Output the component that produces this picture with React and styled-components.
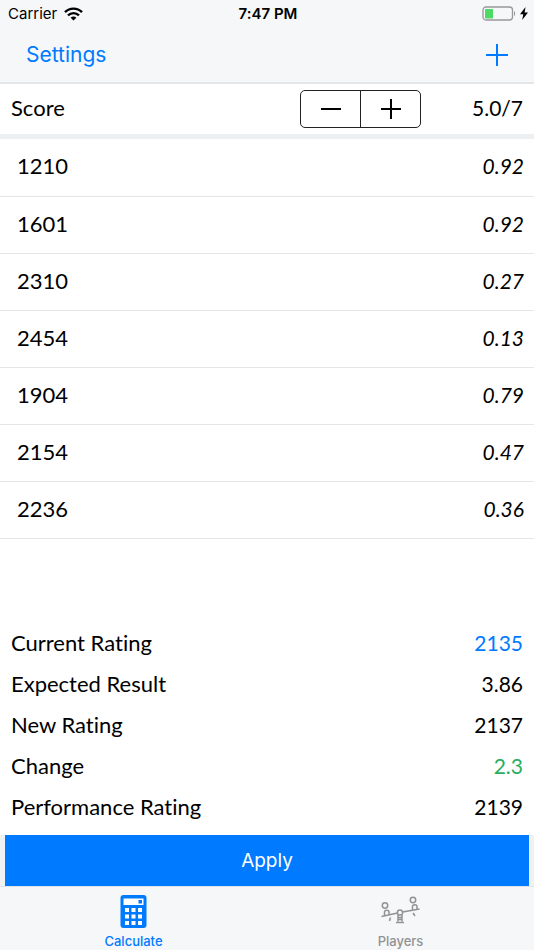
import React, { useState } from 'react';
import styled, { createGlobalStyle } from 'styled-components';

const GlobalStyle = createGlobalStyle`
  * {
    box-sizing: border-box;
  }

  body {
    margin: 0;
    background-color: #fff;
    color: #000;
    font-family: Lato, sans-serif;
    font-variant-ligatures: none;
  }

  button {
    padding: 0;
    border: 0;
    background: none;
    color: inherit;
    font: inherit;
    cursor: pointer;
  }
`;

const Screen = styled.div`
  display: flex;
  flex-direction: column;
  min-height: 100vh;
`;

const Header = styled.header`
  background-color: #f5f7f9;
  border-bottom: 2px solid #e4e7e8;
  font-family: Inter, sans-serif;
`;

const StatusBar = styled.div`
  display: grid;
  grid-template-columns: 1fr auto 1fr;
  align-items: center;
  height: 27px;
  padding: 0 6px 0 8px;
  font-size: 15px;
`;

const Carrier = styled.span`
  display: flex;
  align-items: center;
  gap: 7px;
`;

const Clock = styled.span`
  font-weight: 600;
`;

const Power = styled.span`
  display: flex;
  align-items: center;
  justify-content: flex-end;
  gap: 4px;
`;

const NavBar = styled.div`
  display: flex;
  align-items: center;
  justify-content: space-between;
  height: 55px;
  padding: 0 26px;
  color: #007aff;
  font-size: 21px;
`;

const IconButton = styled.button`
  display: flex;
`;

const ScoreBar = styled.section`
  display: grid;
  grid-template-columns: 1fr auto 102px;
  align-items: center;
  height: 55px;
  padding: 0 11px;
  border-bottom: 5px solid #edf0f2;
  font-size: 22px;
`;

const ScoreLabel = styled.span`
  padding-bottom: 3px;
`;

const Stepper = styled.div`
  display: flex;
  width: 121px;
  height: 38px;
  border: 1px solid #222;
  border-radius: 5px;
`;

const StepButton = styled.button`
  display: flex;
  flex: 1;
  align-items: center;
  justify-content: center;

  & + & {
    border-left: 1px solid #222;
  }
`;

const ScoreValue = styled.output`
  padding-bottom: 3px;
  font-size: 21px;
  text-align: right;
`;

const Opponents = styled.table`
  width: 100%;
  border-collapse: collapse;
  font-size: 22px;
`;

const OpponentRow = styled.tr`
  height: 57px;
  border-bottom: 1px solid #e4e6e7;
`;

const Rating = styled.td`
  padding: 0 17px 3px;
`;

const Expected = styled.td`
  padding: 0 10px 3px;
  font-size: 21px;
  font-style: italic;
  text-align: right;
`;

const Summary = styled.dl`
  margin: auto 0 0;
  padding: 20px 11px 8px;
  font-size: 22px;
`;

const SummaryRow = styled.div`
  display: flex;
  align-items: center;
  justify-content: space-between;
  height: 41px;
`;

const SummaryValue = styled.dd`
  margin: 0;
  color: ${({ $color }) => $color || '#000'};
  font-size: 21px;
`;

const ApplyBar = styled.div`
  padding: 0 5px;
  background-color: #eff1f3;
`;

const ApplyButton = styled.button`
  display: block;
  width: 100%;
  height: 51px;
  background-color: #007aff;
  color: #fff;
  font-family: Inter, sans-serif;
  font-size: 19px;
`;

const TabBar = styled.nav`
  display: flex;
  height: 64px;
  border-top: 1px solid #dfe3e8;
  background-color: #f5f7f9;
`;

const Tab = styled.a`
  display: flex;
  flex: 1;
  flex-direction: column;
  align-items: center;
  justify-content: space-between;
  padding: 8px 0 1px;
  color: ${({ $active }) => ($active ? '#007aff' : '#929292')};
  font-family: Inter, sans-serif;
  font-size: 13px;
  font-weight: 500;
  line-height: 16px;
  text-decoration: none;
`;

const opponents = [
  { rating: 1210, expected: '0.92' },
  { rating: 1601, expected: '0.92' },
  { rating: 2310, expected: '0.27' },
  { rating: 2454, expected: '0.13' },
  { rating: 1904, expected: '0.79' },
  { rating: 2154, expected: '0.47' },
  { rating: 2236, expected: '0.36' },
];

const summary = [
  { label: 'Current Rating', value: '2135', color: '#007aff' },
  { label: 'Expected Result', value: '3.86' },
  { label: 'New Rating', value: '2137' },
  { label: 'Change', value: '2.3', color: '#27ae60' },
  { label: 'Performance Rating', value: '2139' },
];

function WifiIcon() {
  return (
    <svg width="19" height="14" viewBox="0 0 19 14" fill="none" stroke="#000" strokeWidth="2.4" aria-hidden="true">
      <path d="M1 5.2C5.8.4 13.2.4 18 5.2" />
      <path d="M4 8.4c3.2-3 7.8-3 11 0" />
      <path d="M9.5 13.6 6.6 10.7c1.7-1.5 4.1-1.5 5.8 0z" fill="#000" stroke="none" />
    </svg>
  );
}

function BatteryIcon() {
  return (
    <svg width="34" height="15" viewBox="0 0 34 15" aria-hidden="true">
      <rect x="1" y="1" width="29.5" height="13" rx="3" fill="none" stroke="#999" strokeWidth="1.3" />
      <rect x="3" y="3" width="8" height="9.5" rx="0.8" fill="#4cd964" />
      <path d="M32 5c1.5.6 1.5 4.4 0 5z" fill="#999" />
    </svg>
  );
}

function BoltIcon() {
  return (
    <svg width="8" height="13" viewBox="0 0 8 13" aria-hidden="true">
      <path d="M5.5 0 0 7.3h3.3L2.2 13 8 5.5H4.6z" />
    </svg>
  );
}

function PlusIcon({ size }) {
  const mid = size / 2;
  return (
    <svg width={size} height={size} stroke="currentColor" strokeWidth="2" aria-hidden="true">
      <path d={`M0 ${mid}H${size}M${mid} 0V${size}`} />
    </svg>
  );
}

function MinusIcon() {
  return (
    <svg width="20" height="20" stroke="currentColor" strokeWidth="2" aria-hidden="true">
      <path d="M0 10H20" />
    </svg>
  );
}

function CalculatorIcon() {
  return (
    <svg width="27" height="33" viewBox="0 0 27 33" aria-hidden="true">
      <rect x="0.5" width="26" height="33" rx="3" fill="#007aff" />
      <rect x="3.5" y="3.5" width="20" height="6.5" fill="#fff" />
      <rect x="18.5" y="5" width="3.5" height="3.5" fill="#007aff" />
      {[13, 19.5, 26].map((y) =>
        [5, 11.5, 18].map((x) => (
          <rect key={`${x}-${y}`} x={x} y={y} width="4" height="4" fill="#fff" />
        ))
      )}
    </svg>
  );
}

function SeesawIcon() {
  return (
    <svg width="40" height="30" viewBox="0 0 40 30" fill="none" stroke="currentColor" strokeWidth="1.5" aria-hidden="true">
      <path d="M.5 21.5 16.5 18M21.500 17l17-3" />
      <circle cx="19" cy="17.500" r="2.600" />
      <circle cx="4" cy="10.500" r="2.700" />
      <path d="M3.500 20.500v-3.500c0-2.500 4.500-2.500 4.500 0V19.500M9.500 22.500l-1 3.500" />
      <circle cx="32" cy="5" r="2.700" />
      <path d="M31.500 15v-3.500c0-2.500 4.500-2.500 4.500 0V14.500M32 18l2 3" />
      <path d="M17 20v6.500M21 20v6.500M17 22.500h4M17 24.500h4M15 27.500h8" />
    </svg>
  );
}

function App() {
  const [score, setScore] = useState(5);

  return (
    <Screen>
      <GlobalStyle />
      <Header>
        <StatusBar>
          <Carrier>
            Carrier
            <WifiIcon />
          </Carrier>
          <Clock>7:47 PM</Clock>
          <Power>
            <BatteryIcon />
            <BoltIcon />
          </Power>
        </StatusBar>
        <NavBar>
          <button type="button">Settings</button>
          <IconButton type="button" aria-label="Add opponent">
            <PlusIcon size={22} />
          </IconButton>
        </NavBar>
      </Header>

      <ScoreBar>
        <ScoreLabel>Score</ScoreLabel>
        <Stepper role="group" aria-label="Score">
          <StepButton type="button" aria-label="Decrease score" onClick={() => setScore(Math.max(0, score - 0.5))}>
            <MinusIcon />
          </StepButton>
          <StepButton
            type="button"
            aria-label="Increase score"
            onClick={() => setScore(Math.min(opponents.length, score + 0.5))}
          >
            <PlusIcon size={20} />
          </StepButton>
        </Stepper>
        <ScoreValue>{`${score.toFixed(1)}/${opponents.length}`}</ScoreValue>
      </ScoreBar>

      <Opponents>
        <tbody>
          {opponents.map(({ rating, expected }) => (
            <OpponentRow key={rating}>
              <Rating>{rating}</Rating>
              <Expected>{expected}</Expected>
            </OpponentRow>
          ))}
        </tbody>
      </Opponents>

      <Summary>
        {summary.map(({ label, value, color }) => (
          <SummaryRow key={label}>
            <dt>{label}</dt>
            <SummaryValue $color={color}>{value}</SummaryValue>
          </SummaryRow>
        ))}
      </Summary>

      <ApplyBar>
        <ApplyButton type="button">Apply</ApplyButton>
      </ApplyBar>

      <TabBar>
        <Tab href="#calculate" $active aria-current="page">
          <CalculatorIcon />
          Calculate
        </Tab>
        <Tab href="#players">
          <SeesawIcon />
          Players
        </Tab>
      </TabBar>
    </Screen>
  );
}

export default App;
